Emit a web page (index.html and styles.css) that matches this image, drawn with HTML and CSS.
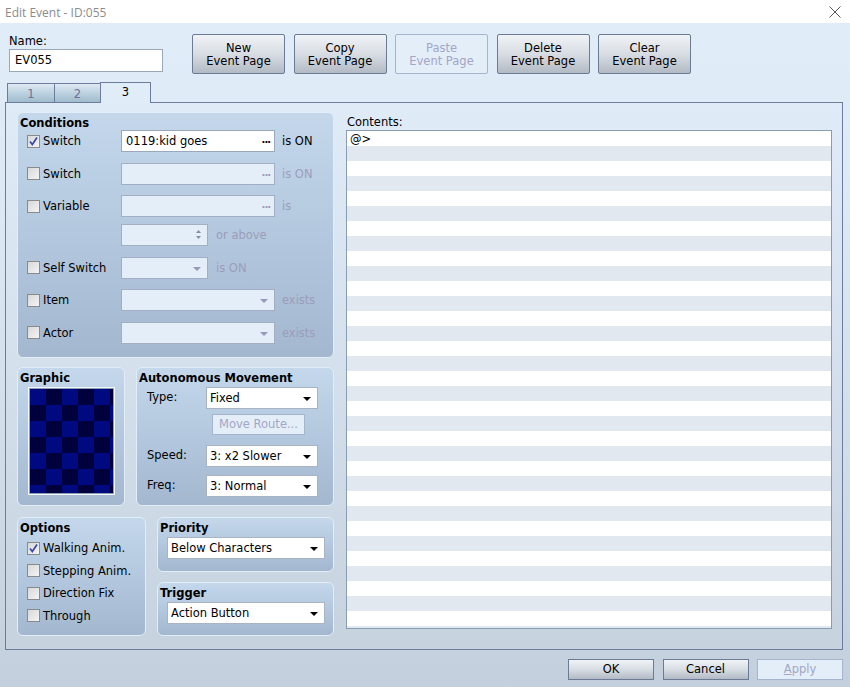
FILE: index.html
```html
<!DOCTYPE html>
<html>
<head>
<meta charset="utf-8">
<link rel="stylesheet" href="styles.css">
</head>
<body>
<div class="window">
  <div class="titlebar">
    <span class="title">Edit Event - ID:055</span>
    <svg class="close" width="12" height="12" viewBox="0 0 12 12"><path d="M0.5 0.5 L11.5 11.5 M11.5 0.5 L0.5 11.5" stroke="#555" stroke-width="1" fill="none"/></svg>
  </div>
  <div class="dialog">
    <div class="top">
      <div class="name-col">
        <div class="name-label">Name:</div>
        <div class="textbox name-input">EV055</div>
      </div>
      <div class="page-buttons">
        <div class="btn big">New<br>Event Page</div>
        <div class="btn big">Copy<br>Event Page</div>
        <div class="btn big disabled">Paste<br>Event Page</div>
        <div class="btn big">Delete<br>Event Page</div>
        <div class="btn big">Clear<br>Event Page</div>
      </div>
    </div>
    <div class="tabs">
      <div class="tab">1</div>
      <div class="tab">2</div>
      <div class="tab active">3</div>
    </div>
    <div class="panel">
      <div class="left">
        <div class="group conditions">
          <div class="gtitle">Conditions</div>
          <div class="crow">
            <div class="chk-label"><span class="cb checked"><svg width="11" height="11" viewBox="0 0 11 11"><path d="M2 5.5 L4.3 8.5 L9 1.5" stroke="#3848a8" stroke-width="1.7" fill="none"/></svg></span>Switch</div>
            <div class="textbox field wide">0119:kid goes<span class="dots">...</span></div>
            <span class="suffix">is ON</span>
          </div>
          <div class="crow">
            <div class="chk-label"><span class="cb"></span>Switch</div>
            <div class="textbox field wide off"><span class="dots">...</span></div>
            <span class="suffix off">is ON</span>
          </div>
          <div class="crow">
            <div class="chk-label"><span class="cb"></span>Variable</div>
            <div class="textbox field wide off"><span class="dots">...</span></div>
            <span class="suffix off">is</span>
          </div>
          <div class="crow spinrow">
            <div class="chk-label"></div>
            <div class="textbox field narrow off"><span class="spin"><svg width="7" height="13" viewBox="0 0 7 13"><path d="M1 5 L3.5 2 L6 5 Z M1 8 L3.5 11 L6 8 Z" fill="#8a8aa8"/></svg></span></div>
            <span class="suffix off wide-gap">or above</span>
          </div>
          <div class="crow">
            <div class="chk-label"><span class="cb"></span>Self Switch</div>
            <div class="select field narrow off"><span class="arrow"></span></div>
            <span class="suffix off wide-gap">is ON</span>
          </div>
          <div class="crow">
            <div class="chk-label"><span class="cb"></span>Item</div>
            <div class="select field wide off"><span class="arrow"></span></div>
            <span class="suffix off">exists</span>
          </div>
          <div class="crow">
            <div class="chk-label"><span class="cb"></span>Actor</div>
            <div class="select field wide off"><span class="arrow"></span></div>
            <span class="suffix off">exists</span>
          </div>
        </div>

        <div class="row2">
          <div class="group graphic">
            <div class="gtitle">Graphic</div>
            <div class="gframe"><div class="checker"></div></div>
          </div>
          <div class="group movement">
            <div class="gtitle">Autonomous Movement</div>
            <div class="mrow"><span class="mlabel">Type:</span><div class="select field msel">Fixed<span class="arrow"></span></div></div>
            <div class="btn route disabled">Move Route...</div>
            <div class="mrow speed"><span class="mlabel">Speed:</span><div class="select field msel">3: x2 Slower<span class="arrow"></span></div></div>
            <div class="mrow freq"><span class="mlabel">Freq:</span><div class="select field msel">3: Normal<span class="arrow"></span></div></div>
          </div>
        </div>

        <div class="row3">
          <div class="group options">
            <div class="gtitle">Options</div>
            <div class="orow"><span class="cb checked"><svg width="11" height="11" viewBox="0 0 11 11"><path d="M2 5.5 L4.3 8.5 L9 1.5" stroke="#3848a8" stroke-width="1.7" fill="none"/></svg></span>Walking Anim.</div>
            <div class="orow"><span class="cb"></span>Stepping Anim.</div>
            <div class="orow"><span class="cb"></span>Direction Fix</div>
            <div class="orow"><span class="cb"></span>Through</div>
          </div>
          <div class="col-pt">
            <div class="group small">
              <div class="gtitle">Priority</div>
              <div class="select field psel">Below Characters<span class="arrow"></span></div>
            </div>
            <div class="group small">
              <div class="gtitle">Trigger</div>
              <div class="select field psel">Action Button<span class="arrow"></span></div>
            </div>
          </div>
        </div>
      </div>
      <div class="right">
        <div class="contents-label">Contents:</div>
        <div class="listbox"><div class="line">@&gt;</div></div>
      </div>
    </div>
    <div class="bottom">
      <div class="btn foot">OK</div>
      <div class="btn foot">Cancel</div>
      <div class="btn foot disabled"><span class="ul">A</span>pply</div>
    </div>
  </div>
</div>
</body>
</html>
```
FILE: styles.css
```css
html, body {
  margin: 0;
  padding: 0;
}
body {
  width: 850px;
  height: 687px;
  overflow: hidden;
  font-family: "DejaVu Sans", Verdana, sans-serif;
  font-size: 11.5px;
  color: #000;
}
.window {
  width: 850px;
  height: 687px;
  display: flex;
  flex-direction: column;
}
.titlebar {
  height: 23px;
  background: #fff;
  display: flex;
  align-items: center;
  justify-content: space-between;
  padding: 0 9px 0 5px;
  box-sizing: border-box;
}
.title {
  font-family: "Open Sans", "Liberation Sans", sans-serif;
  font-size: 12px;
  color: #8c8c8c;
  margin-top: 1px;
}
.close {
  display: block;
}
.dialog {
  flex: 1;
  display: flex;
  flex-direction: column;
  background: linear-gradient(#e0ecf8 0%, #dde9f5 25%, #cfdbe7 70%, #c3cfdc 100%);
}
.top {
  height: 59px;
  box-sizing: border-box;
  padding: 11px 0 0 9px;
  display: flex;
}
.name-col {
  width: 154px;
}
.name-label {
  height: 15px;
  line-height: 14px;
}
.textbox {
  background: #fff;
  border: 1px solid #9aa8bb;
  box-sizing: border-box;
}
.name-input {
  height: 23px;
  line-height: 21px;
  padding-left: 5px;
}
.page-buttons {
  display: flex;
  gap: 8.5px;
  margin-left: 29px;
}
.btn {
  box-sizing: border-box;
  border: 1px solid #6b7b96;
  border-radius: 2px;
  background: linear-gradient(#f0f3f6 0%, #d8dde3 50%, #b2bac4 100%);
  text-align: center;
  color: #000;
}
.btn.disabled {
  background: #e4eef9;
  border-color: #a5b5cd;
  color: #a2a6c6;
}
.btn.big {
  width: 93px;
  height: 40px;
  line-height: 13px;
  padding-top: 7px;
}
.tabs {
  height: 20px;
  display: flex;
  align-items: flex-end;
  padding-left: 7px;
  position: relative;
  z-index: 2;
}
.tab {
  box-sizing: border-box;
  height: 19px;
  width: 48px;
  border: 1px solid #6b7c9c;
  border-bottom: none;
  margin-right: -1px;
  background: linear-gradient(#dfeaf2 0%, #bcd2e0 50%, #a0bccd 100%);
  color: #707098;
  text-align: center;
  line-height: 21px;
}
.tab:nth-child(2) {
  width: 47px;
}
.tab.active {
  width: 51px;
  height: 21px;
  margin-bottom: -1px;
  background: #e0ecf8;
  color: #000;
  line-height: 18px;
}
.panel {
  height: 548px;
  margin: 0 7px 0 5px;
  border: 1px solid #6b7c9c;
  box-sizing: border-box;
  background: linear-gradient(#dfebf7 0%, #d6e2ee 40%, #c6d2de 100%);
  padding: 9px 10px 0 11px;
  display: flex;
  gap: 12px;
}
.left {
  width: 317px;
  flex: none;
  display: flex;
  flex-direction: column;
}
.group {
  box-sizing: border-box;
  border: 1px solid #e2edf8;
  border-radius: 6px;
  background: linear-gradient(#c4d7eb 0%, #b3c8de 50%, #a3b8ce 100%);
}
.gtitle {
  font-weight: bold;
  line-height: 14px;
  padding: 3px 0 0 2px;
}
.conditions {
  height: 246px;
  display: flex;
  flex-direction: column;
  gap: 10.5px;
}
.conditions .gtitle {
  margin-bottom: -10.5px;
}
.crow {
  height: 22px;
  display: flex;
  align-items: center;
}
.crow.spinrow {
  margin-top: -3.5px;
}
.chk-label {
  width: 94px;
  margin-left: 9px;
  display: flex;
  align-items: center;
  flex: none;
}
.cb {
  width: 13px;
  height: 13px;
  box-sizing: border-box;
  border: 1px solid #8a8a8a;
  background: linear-gradient(135deg, #d8d8d8 0%, #f4f4f4 100%);
  margin-right: 3px;
  display: flex;
  align-items: center;
  justify-content: center;
  flex: none;
}
.cb svg {
  display: block;
}
.field {
  height: 22px;
  box-sizing: border-box;
  position: relative;
  line-height: 20px;
  padding-left: 4px;
  flex: none;
}
.field.wide {
  width: 154px;
}
.field.narrow {
  width: 87px;
}
.field.off {
  background: #e4eef8;
  border: 1px solid #a2aec2;
}
.dots {
  position: absolute;
  right: 4px;
  top: -1px;
  font-weight: bold;
  font-size: 10px;
  letter-spacing: -1px;
  color: #000;
}
.off .dots {
  color: #9a9ab8;
}
.spin {
  position: absolute;
  right: 5px;
  top: 3px;
}
.spin svg {
  display: block;
}
.suffix {
  margin-left: 7px;
}
.suffix.off {
  color: #9c9cba;
}
.suffix.wide-gap {
  margin-left: 8px;
}
.select {
  background: #fff;
  border: 1px solid #a8b4c4;
}
.arrow {
  position: absolute;
  right: 6px;
  top: 9px;
  width: 0;
  height: 0;
  border-left: 4px solid transparent;
  border-right: 4px solid transparent;
  border-top: 4px solid #000;
}
.off .arrow {
  border-top-color: #9898b8;
}
.row2 {
  margin-top: 9px;
  height: 139px;
  display: flex;
  gap: 11px;
}
.graphic {
  width: 108px;
  flex: none;
}
.gframe {
  margin: 2px 0 0 10px;
  width: 87px;
  height: 108px;
  box-sizing: border-box;
  border: 1px solid #f4f7fa;
  outline: 1px solid #8f9fb2;
  outline-offset: -2px;
  padding: 1px;
}
.checker {
  width: 100%;
  height: 100%;
  background-color: #00003c;
  background-image: conic-gradient(#00003c 0 25%, #000a80 0 50%, #00003c 0 75%, #000a80 0);
  background-size: 32px 32px;
}
.movement {
  flex: 1;
  padding-left: 10px;
}
.movement .gtitle {
  padding-left: 2px;
  margin-left: -10px;
  margin-bottom: 2px;
}
.mrow {
  height: 22px;
  display: flex;
  align-items: center;
}
.mlabel {
  width: 59px;
  flex: none;
  margin-top: -2px;
}
.msel {
  width: 112px;
  padding-left: 3px;
}
.route {
  width: 93px;
  height: 21px;
  line-height: 19px;
  margin: 5px 0 0 65px;
  border-radius: 0;
}
.speed {
  margin-top: 10px;
}
.freq {
  margin-top: 8px;
}
.row3 {
  margin-top: 11px;
  height: 119px;
  display: flex;
  gap: 11px;
}
.options {
  width: 129px;
  flex: none;
}
.options .gtitle {
  margin-bottom: 2px;
}
.orow {
  height: 22.5px;
  display: flex;
  align-items: center;
  padding-left: 9px;
}
.col-pt {
  flex: 1;
  display: flex;
  flex-direction: column;
  gap: 10px;
}
.group.small {
  height: 54px;
}
.col-pt .group.small:first-child {
  height: 55px;
}
.psel {
  width: 158px;
  margin: 2px 0 0 9px;
  padding-left: 3px;
}
.right {
  flex: 1;
  display: flex;
  flex-direction: column;
}
.contents-label {
  line-height: 14px;
  padding-top: 3px;
  margin-bottom: 1px;
  padding-left: 1px;
}
.listbox {
  height: 499px;
  box-sizing: border-box;
  border: 1px solid #8a9cb0;
  background: repeating-linear-gradient(#fff 0 15px, #e1e8f0 15px 30px);
}
.line {
  height: 15px;
  line-height: 16px;
  padding-left: 3px;
}
.bottom {
  display: flex;
  justify-content: flex-end;
  gap: 8.5px;
  padding: 9px 7px 0 0;
}
.btn.foot {
  width: 86px;
  height: 21px;
  line-height: 19px;
  border-radius: 0;
}
.ul {
  text-decoration: underline;
}
```
